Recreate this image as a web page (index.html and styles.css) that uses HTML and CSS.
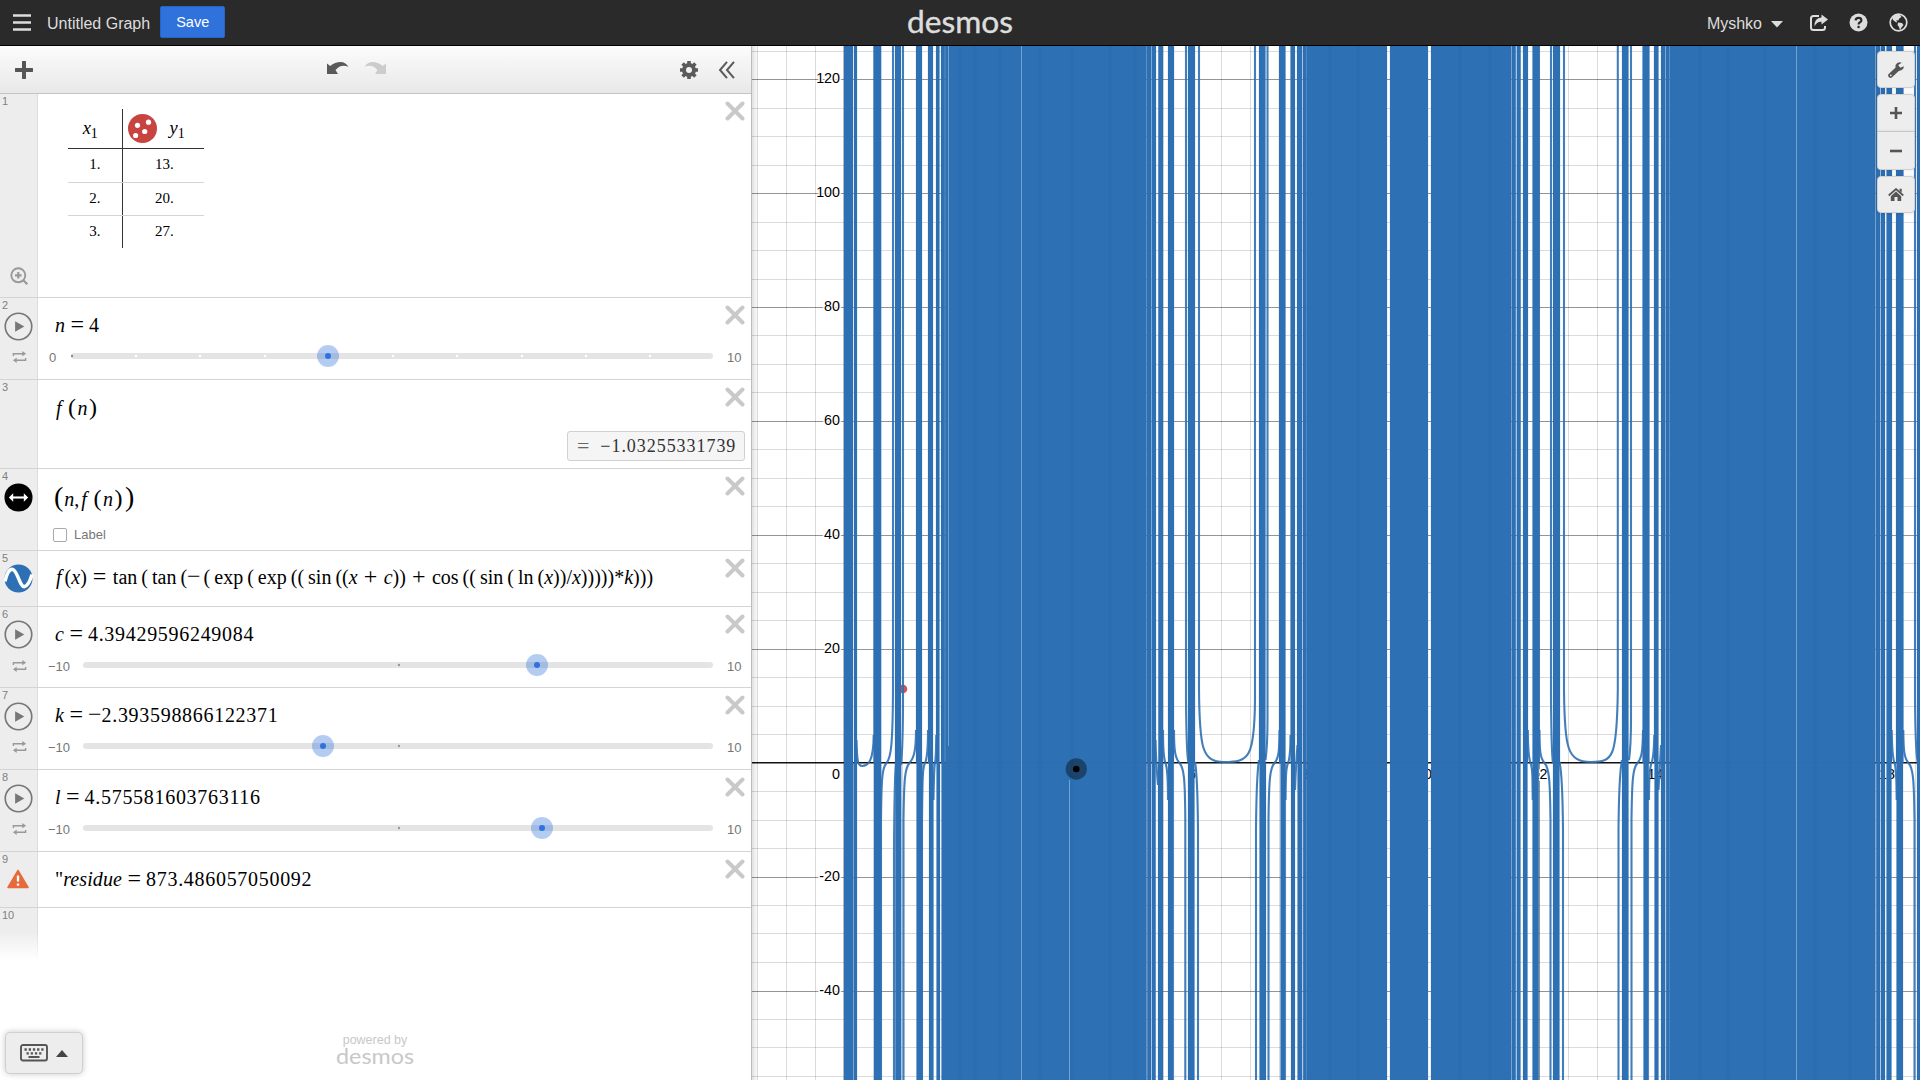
FILE: index.html
```html
<!DOCTYPE html>
<html lang="en">
<head>
<meta charset="utf-8">
<title>Untitled Graph</title>
<link rel="stylesheet" href="styles.css">
</head>
<body>
<svg width="0" height="0" class="defs">
  <symbol id="close" viewBox="0 0 20 20"><path d="M2.500 2.500l15 15M17.500 2.500l-15 15" stroke="#c9c9c9" stroke-width="4" stroke-linecap="round"/></symbol>
  <symbol id="play" viewBox="0 0 30 30"><circle cx="15" cy="15" r="13.700" fill="none" stroke="#777" stroke-width="1.700"/><path d="M11.500 9.500v11l9.500-5.500z" fill="#777"/></symbol>
  <symbol id="loop" viewBox="0 0 16 14"><path d="M1.500 6V3.500H13M14.500 8v2.500H3" fill="none" stroke="#999" stroke-width="1.500"/><path d="M11 0.500l4 3-4 2.800zM5 7.700l-4 2.800 4 3z" fill="#999"/></symbol>
</svg>
<header class="topbar">
  <svg class="burger" width="18" height="17"><path d="M0 1.500h18M0 8.500h18M0 15.500h18" stroke="#ddd" stroke-width="2.600"/></svg>
  <span class="title">Untitled Graph</span>
  <button class="save">Save</button>
  <svg class="logo" width="110" height="45"><text x="1" y="33" textLength="106" lengthAdjust="spacingAndGlyphs">desmos</text></svg>
  <nav class="account">
    <span>Myshko</span>
    <svg class="caret" width="12" height="7"><path d="M0 0h12l-6 6.500z" fill="#ddd"/></svg>
    <svg class="share" width="20" height="18" viewBox="0 0 20 18"><path d="M10 2H4.500Q2 2 2 4.500v9Q2 16 4.500 16h9Q16 16 16 13.500V12" fill="none" stroke="#ddd" stroke-width="2"/><path d="M12.500 0.500l6.500 5-6.500 5V7.700Q7.500 7.500 5.500 12.500Q5 4 12.500 3.500z" fill="#ddd"/></svg>
    <svg class="help" width="19" height="19" viewBox="0 0 19 19"><circle cx="9.500" cy="9.500" r="9" fill="#ddd"/><path d="M6.600 7.400Q6.700 4.800 9.500 4.800T12.400 7.200Q12.400 8.600 11 9.300Q9.600 10 9.600 11.400" fill="none" stroke="#2a2a2a" stroke-width="2.200"/><circle cx="9.600" cy="14" r="1.300" fill="#2a2a2a"/></svg>
    <svg width="19" height="19" viewBox="0 0 19 19"><circle cx="9.500" cy="9.500" r="8.300" fill="none" stroke="#ddd" stroke-width="1.700"/><path d="M3 4.500L6.500 1.500l4.500.5 1.500 2-2 1.200-1 2-2.300.3 1 1.500-1 .5L4 7zM9 9.500l4 .5 1.500 2-2 2.500-1.500 2.700-1-3.200-1.500-2z" fill="#ddd"/></svg>
  </nav>
</header>
<main class="workspace">
  <section class="panel">
    <div class="toolbar">
      <svg class="add" width="18" height="18"><path d="M9 1v16M1 9h16" stroke="#555" stroke-width="4" stroke-linecap="round"/></svg>
      <svg class="undo" width="22" height="13" viewBox="0 0 22 13"><path d="M0 1.500l3.200 2.500Q8 0 13.500 0Q18.500 0 21.500 4.800Q14 1.500 8.500 8l2.500 4H0z" fill="#5a5a5a"/></svg>
      <svg class="redo" width="22" height="13" viewBox="0 0 22 13"><path d="M22 1.500l-3.200 2.500Q14 0 8.500 0Q3.500 0 .5 4.800Q8 1.500 13.500 8l-2.500 4H22z" fill="#ccc"/></svg>
      <svg class="gear" width="18" height="18" viewBox="0 0 18 18"><circle cx="9" cy="9" r="5" fill="none" stroke="#5a5a5a" stroke-width="4"/><path d="M9 0v3.500M9 14.500V18M0 9h3.500M14.500 9H18M2.600 2.600l2.500 2.500M12.900 12.900l2.500 2.500M15.400 2.600l-2.500 2.500M5.100 12.900l-2.500 2.500" stroke="#5a5a5a" stroke-width="3.600"/></svg>
      <svg class="collapse" width="18" height="18"><path d="M9 .8L2 9l7 8.200M16 .8L9 9l7 8.200" fill="none" stroke="#5a5a5a" stroke-width="2"/></svg>
    </div>

    <div class="row row-table">
      <div class="gutter"><b>1</b><svg class="zoomfit" width="19" height="19" viewBox="0 0 19 19"><circle cx="8.300" cy="8.300" r="7" fill="none" stroke="#999" stroke-width="1.900"/><path d="M5 8.300h6.600M8.300 5v6.600M13.300 13.300l4 4" stroke="#999" stroke-width="2.200"/></svg></div>
      <div class="cell">
        <table>
          <tr class="head"><td><i>x</i><sub>1</sub></td><td><div class="yhead"><svg width="29" height="29"><circle cx="14.500" cy="14.500" r="14.500" fill="#c74440"/><g fill="#fff"><circle cx="9.500" cy="11.300" r="2.600"/><circle cx="20.500" cy="8.200" r="2.600"/><circle cx="16.700" cy="17.500" r="2.600"/><circle cx="7.600" cy="21.500" r="2.600"/></g></svg><span><i>y</i><sub>1</sub></span></div></td></tr>
          <tr class="tall"><td>1.</td><td>13.</td></tr>
          <tr><td>2.</td><td>20.</td></tr>
          <tr><td>3.</td><td>27.</td></tr>
        </table>
      </div>
      <svg class="close"><use href="#close"/></svg>
    </div>

    <div class="row row-slider">
      <div class="gutter"><b>2</b><svg class="badge"><use href="#play"/></svg><svg class="loop"><use href="#loop"/></svg></div>
      <div class="cell">
        <div class="math"><i>n</i><span class="op">=</span><span class="num">4</span></div>
        <div class="slider"><span class="min short">0</span><svg class="track" width="642" height="24"><rect y="9" width="642" height="6" rx="3" fill="#e4e4e4"/><g fill="#fff"><circle cx="65" cy="12" r="1.200"/><circle cx="129" cy="12" r="1.200"/><circle cx="194" cy="12" r="1.200"/><circle cx="322" cy="12" r="1.200"/><circle cx="386" cy="12" r="1.200"/><circle cx="451" cy="12" r="1.200"/><circle cx="515" cy="12" r="1.200"/><circle cx="579" cy="12" r="1.200"/></g><circle cx="1" cy="12" r="1.200" fill="#888"/><circle cx="257" cy="12" r="11" fill="#2f72dc" opacity=".36"/><circle cx="257" cy="12" r="3" fill="#2f72dc"/></svg><span class="max">10</span></div>
      </div>
      <svg class="close"><use href="#close"/></svg>
    </div>

    <div class="row row-eval">
      <div class="gutter"><b>3</b></div>
      <div class="cell">
        <div class="math"><i class="f">f</i><span class="p24">(</span><i>n</i><span class="p24">)</span></div>
        <div class="result"><span class="op">=</span><span>−1.03255331739</span></div>
      </div>
      <svg class="close"><use href="#close"/></svg>
    </div>

    <div class="row row-point">
      <div class="gutter"><b>4</b><svg class="badge" viewBox="0 0 30 30"><circle cx="15" cy="15" r="14.500"/><path d="M8 15h14" stroke="#fff" stroke-width="2.200"/><path d="M9.500 10.500L5 15l4.500 4.500zM20.500 10.500L25 15l-4.500 4.500z" fill="#fff"/></svg></div>
      <div class="cell">
        <div class="math"><span class="p28">(</span><i>n</i><span>,</span><i class="f">f</i><span class="p24">(</span><i>n</i><span class="p24">)</span><span class="p28">)</span></div>
        <label class="check"><span class="box"></span>Label</label>
      </div>
      <svg class="close"><use href="#close"/></svg>
    </div>

    <div class="row row-short">
      <div class="gutter"><b>5</b><svg class="badge up" viewBox="0 0 30 30"><circle cx="15" cy="15" r="14.500" fill="#2d70b3"/><path d="M1 18C3.500 8 5.500 5.500 8.500 5.500C14 6 16 23.500 21 23.500C24.500 23 26.500 19 29 11" fill="none" stroke="#fff" stroke-width="3.600"/></svg></div>
      <div class="cell">
        <div class="math long"><i class="f">f</i>(<i>x</i>)<span class="op">=</span><span class="fn first">tan</span>(<span class="fn">tan</span>(<span class="neg">−</span>(<span class="fn">exp</span>(<span class="fn">exp</span>((<span class="fn">sin</span>((<i>x</i><span class="op">+</span><i>c</i>))<span class="op">+</span><span class="fn first">cos</span>((<span class="fn">sin</span>(<span class="fn">ln</span>(<i>x</i>))/<i>x</i>)))))*<i>k</i>)))</div>
      </div>
      <svg class="close"><use href="#close"/></svg>
    </div>

    <div class="row row-slider less">
      <div class="gutter"><b>6</b><svg class="badge up"><use href="#play"/></svg><svg class="loop"><use href="#loop"/></svg></div>
      <div class="cell">
        <div class="math"><i>c</i><span class="op">=</span><span class="num">4.39429596249084</span></div>
        <div class="slider"><span class="min">−10</span><svg class="track" width="630" height="24"><rect y="9" width="630" height="6" rx="3" fill="#e4e4e4"/><circle cx="316" cy="12" r="1.200" fill="#999"/><circle cx="454" cy="12" r="11" fill="#2f72dc" opacity=".36"/><circle cx="454" cy="12" r="3" fill="#2f72dc"/></svg><span class="max">10</span></div>
      </div>
      <svg class="close"><use href="#close"/></svg>
    </div>

    <div class="row row-slider">
      <div class="gutter"><b>7</b><svg class="badge"><use href="#play"/></svg><svg class="loop"><use href="#loop"/></svg></div>
      <div class="cell">
        <div class="math"><i>k</i><span class="op">=</span><span class="neg">−</span><span class="num">2.393598866122371</span></div>
        <div class="slider"><span class="min">−10</span><svg class="track" width="630" height="24"><rect y="9" width="630" height="6" rx="3" fill="#e4e4e4"/><circle cx="316" cy="12" r="1.200" fill="#999"/><circle cx="240" cy="12" r="11" fill="#2f72dc" opacity=".36"/><circle cx="240" cy="12" r="3" fill="#2f72dc"/></svg><span class="max">10</span></div>
      </div>
      <svg class="close"><use href="#close"/></svg>
    </div>

    <div class="row row-slider">
      <div class="gutter"><b>8</b><svg class="badge"><use href="#play"/></svg><svg class="loop"><use href="#loop"/></svg></div>
      <div class="cell">
        <div class="math"><i>l</i><span class="op">=</span><span class="num">4.575581603763116</span></div>
        <div class="slider"><span class="min">−10</span><svg class="track" width="630" height="24"><rect y="9" width="630" height="6" rx="3" fill="#e4e4e4"/><circle cx="316" cy="12" r="1.200" fill="#999"/><circle cx="459" cy="12" r="11" fill="#2f72dc" opacity=".36"/><circle cx="459" cy="12" r="3" fill="#2f72dc"/></svg><span class="max">10</span></div>
      </div>
      <svg class="close"><use href="#close"/></svg>
    </div>

    <div class="row row-short">
      <div class="gutter"><b>9</b><svg class="warn" width="22" height="20" viewBox="0 0 22 20"><path d="M11 1.500L21 18.500H1z" fill="#e86a3c" stroke="#e86a3c" stroke-width="1.500" stroke-linejoin="round"/><path d="M11 6.500v6M11 14.500v2.300" stroke="#fff" stroke-width="2.300"/></svg></div>
      <div class="cell">
        <div class="math"><span>"</span><i class="word">residue</i><span class="op">=</span><span class="num">873.486057050092</span></div>
      </div>
      <svg class="close"><use href="#close"/></svg>
    </div>

    <div class="row row-last"><div class="gutter"><b>10</b></div></div>

    <footer class="bottom">
      <button class="keypad">
        <svg width="28" height="18" viewBox="0 0 28 18"><rect x="1" y="1" width="26" height="15.500" rx="2" fill="none" stroke="#555" stroke-width="1.900"/><path d="M4.500 5.500h19" stroke="#555" stroke-width="2.300" stroke-dasharray="2.300 1.900"/><path d="M6.500 9.300h15" stroke="#555" stroke-width="2.300" stroke-dasharray="2.300 1.900"/><path d="M8.500 13h11" stroke="#555" stroke-width="2"/></svg>
        <svg width="12" height="7"><path d="M0 7h12L6 0z" fill="#444"/></svg>
      </button>
      <div class="powered"><span>powered by</span><svg width="80" height="28"><text x="1" y="19" textLength="78" lengthAdjust="spacingAndGlyphs">desmos</text></svg></div>
    </footer>
  </section>

  <section class="graph">
    <svg class="plot" width="1168" height="1034" viewBox="752 46 1168 1034">
      <defs><linearGradient id="edge"><stop offset="0" stop-color="#000" stop-opacity=".12"/><stop offset="1" stop-color="#000" stop-opacity="0"/></linearGradient></defs>
      <rect x="752" y="46" width="1168" height="1034" fill="#fff"/>
      <path class="minor" d="M757.500 46v1034M786.500 46v1034M815.500 46v1034M873.500 46v1034M902.500 46v1034M931.500 46v1034M1163.500 46v1034M1221.500 46v1034M1250.500 46v1034M1279.500 46v1034M1568.500 46v1034M1597.500 46v1034M1626.500 46v1034M1915.500 46v1034"/>
      <path class="minor" d="M752 51.500h1168M752 108.500h1168M752 136.500h1168M752 165.500h1168M752 222.500h1168M752 250.500h1168M752 279.500h1168M752 335.500h1168M752 364.500h1168M752 392.500h1168M752 449.500h1168M752 478.500h1168M752 506.500h1168M752 563.500h1168M752 592.500h1168M752 620.500h1168M752 677.500h1168M752 706.500h1168M752 734.500h1168M752 791.500h1168M752 820.500h1168M752 848.500h1168M752 905.500h1168M752 933.500h1168M752 962.500h1168M752 1019.500h1168M752 1047.500h1168M752 1076.500h1168"/>
      <path class="major" d="M752 79.500h1168M752 193.500h1168M752 307.500h1168M752 421.500h1168M752 535.500h1168M752 649.500h1168M752 877.500h1168M752 991.500h1168M1192.500 46v1034M1308.500 46v1034M1539.500 46v1034M1655.500 46v1034M1887.500 46v1034"/>
      <path d="M752 762.700h1168M844.500 46v1034" stroke="#111" stroke-width="1.500"/>
      <g class="ylabel"><text x="840" y="83">120</text><text x="840" y="197">100</text><text x="840" y="311">80</text><text x="840" y="425">60</text><text x="840" y="539">40</text><text x="840" y="653">20</text><text x="840" y="779">0</text><text x="840" y="881">-20</text><text x="840" y="995">-40</text></g>
      <g class="xlabel"><text x="1192" y="779">6</text><text x="1308" y="779">8</text><text x="1424" y="779">10</text><text x="1539.500" y="779">12</text><text x="1655.500" y="779">14</text><text x="1887" y="779">18</text></g>
      <circle cx="903" cy="689" r="4.300" fill="#c74440" opacity=".9"/>
      <path class="soft" d="M944 46h5v1034h-5zM1145 46h6.500v1034h-6.500zM1302.500 46h5v1034h-5zM1511 46h5v1034h-5zM1665.500 46h5v1034h-5zM1875 46h5v1034h-5z"/>
      <!-- branches above the axis -->
      <path class="band" d="M844 46h9V763h-9zM854 46h3V763h-3zM873.500 46h7.700V763h-7.700zM895 46h6V763h-6zM916 46h6V763h-6zM928 46h5V763h-5zM936 46h3.500V763h-3.500zM941 46h3.700V763h-3.700zM945.300 46h201V763h-201zM1147 46h4.300V763h-4.300zM1152 46h4V763h-4zM1158.300 46h4.700V763h-4.700zM1168 46h6V763h-6zM1188 46h7V763h-7zM1259 46h6.500V763h-6.500zM1279 46h6.500V763h-6.500zM1290.500 46h4.500V763h-4.500zM1297 46h5V763h-5zM1303 46h3.500V763h-3.500zM1307 46h80V763h-80zM1390 46h38V763h-38zM1431 46h80V763h-80zM1512 46h3.500V763h-3.500zM1516.700 46h4V763h-4zM1523 46h5V763h-5zM1532.500 46h7.200V763h-7.200zM1553 46h7V763h-7zM1622 46h6.500V763h-6.500zM1642.500 46h7V763h-7zM1654 46h4.500V763h-4.500zM1661 46h4.300V763h-4.300zM1666 46h3.300V763h-3.300zM1670 46h205V763h-205zM1876 46h4.300V763h-4.300zM1881 46h4V763h-4zM1886.500 46h5.500V763h-5.500zM1896 46h7.500V763h-7.500zM1917 46h3V763h-3z"/>
      <!-- branches below the axis -->
      <path class="band" d="M844 763h9.500v317h-9.500zM854 763h3v317h-3zM874 763h7.300v317h-7.300zM895.300 763h6v317h-6zM916.500 763h6v317h-6zM929 763h4.500v317h-4.500zM936.500 763h3.500v317h-3.500zM941.500 763h204.800v317h-204.800zM1147.500 763h3.500v317h-3.500zM1152 763h3.700v317h-3.700zM1158 763h5v317h-5zM1168 763h5.800v317h-5.800zM1188 763h6.500v317h-6.500zM1259.500 763h6.500v317h-6.500zM1280.500 763h5.300v317h-5.300zM1291 763h4v317h-4zM1297.500 763h4.500v317h-4.500zM1303.300 763h3.200v317h-3.200zM1307 763h80v317h-80zM1390 763h38v317h-38zM1431 763h80v317h-80zM1512 763h3.500v317h-3.500zM1516.700 763h3.800v317h-3.800zM1523 763h4.500v317h-4.500zM1532.500 763h6.300v317h-6.300zM1553 763h6.500v317h-6.500zM1622 763h6.500v317h-6.500zM1643.500 763h5.300v317h-5.300zM1654.500 763h4v317h-4zM1661 763h4v317h-4zM1666.300 763h3.200v317h-3.200zM1670 763h205v317h-205zM1876.500 763h3.700v317h-3.700zM1881 763h4v317h-4zM1886.500 763h5v317h-5zM1896.500 763h6.500v317h-6.500zM1917 763h3v317h-3z"/>
      <g class="curve">
        <path d="M856.500 740C857 762 858 766 862 766C868 766 873.500 762 873.700 735M881 1080V820C881.500 778 882 768 886.500 763S892.700 745 893 690V46M894 1080V850Q894.500 775 896 763M903 46V700Q903 745 901 765M903.500 1080V820C904 778 905 768 909.500 763S916 750 916 730M922 1080V820C922.500 778 922.500 768 925 763S928 750 928 730M933.500 800C934 772 934 768 935 763S936 750 936.300 735"/>
        <path d="M1199 46V690C1199.500 748 1202 762 1224 762C1249 762 1254.500 758 1255 700V46M1174 730C1174 750 1175 758 1179.500 763S1185 778 1185.300 820V1080M1163 730C1163 750 1163.500 758 1165.500 763S1168 775 1168 800M1155.500 740Q1156 763 1158 785M1186 46V700Q1186.500 755 1188.500 763M1195 762Q1197.500 775 1198 830V1080M1256 1080V830Q1256.500 775 1259 760M1267.500 46V720Q1267.500 745 1265.500 760M1268.500 1080V820C1269 778 1270 768 1274.500 763S1279.300 750 1279.500 730M1285.500 800C1285.800 775 1286 768 1288 763S1290.500 750 1290.500 735M1295 790Q1296 763 1297.500 745"/>
        <path d="M1564 46V690C1564.500 748 1567 762 1591 762C1613 762 1617 758 1617.800 690V46M1539.500 730C1539.500 750 1540 758 1544.500 763S1550 778 1550.500 820V1080M1527.800 730C1528 750 1528.500 758 1530.500 763S1532.500 775 1532.700 800M1551 46V700Q1551.500 755 1553 763M1559.500 762Q1562.500 775 1563 830V1080M1618.500 1080V830Q1619 775 1622 760M1631 46V720Q1631 745 1629 760M1631.500 1080V820C1632 778 1633 768 1637.500 763S1642.700 750 1643 730M1649 800C1649 775 1649.500 768 1651.500 763S1654 750 1654.300 735M1658.500 790Q1660 763 1661 745M1891.700 730C1892 750 1892.500 758 1894.500 763S1896.300 775 1896.700 800M1903.300 730C1903.500 750 1904 758 1908.500 763S1914 778 1914.500 820V1080M1915 46V700Q1915.500 755 1918 763"/>
      </g>
      <path class="hair" d="M1021.500 46v1034M1069.500 780v300M948.500 46v700M1796.500 46v1034"/>
      <path class="stripe" d="M960 46v1034M975 46v1034M1000 46v1034M1040 46v1034M1072 46v1034M1110 46v1034M1135 46v1034M1330 46v1034M1358 46v1034M1460 46v1034M1490 46v1034M1700 46v1034M1728 46v1034M1765 46v1034M1815 46v1034M1850 46v1034"/>
      <circle cx="1076.300" cy="769" r="10.700" opacity=".4"/><circle cx="1076.300" cy="769" r="3.300"/>
      <rect x="752" y="46" width="6" height="1034" fill="url(#edge)"/>
    </svg>
    <div class="controls">
      <button><svg width="16" height="16" viewBox="0 0 16 16"><path d="M2.500 13.500L10 6.500" stroke="#555" stroke-width="4.600" stroke-linecap="round"/><path d="M13.800.8Q9.500-.8 7.600 3Q7 6 9 8Q12 9.800 15 7Q16 5.500 15.600 4.200L12.500 5.700L10.600 4.600V2.700z" fill="#555"/><circle cx="2.800" cy="13.300" r=".9" fill="#eee"/></svg></button>
      <div class="zoom">
        <button><svg width="12" height="12"><path d="M6 0v12M0 6h12" stroke="#555" stroke-width="2.600"/></svg></button>
        <button><svg width="12" height="12"><path d="M0 6h12" stroke="#555" stroke-width="2.600"/></svg></button>
      </div>
      <button><svg width="16" height="14" viewBox="0 0 16 14"><path d="M.7 7.500L8 1l7.300 6.500" fill="none" stroke="#555" stroke-width="1.700"/><path d="M11.500.8h2.200v4l-2.200-2zM8 3.500l5.200 4.700V13H9.500V9H6.500v4H2.800V8.200z" fill="#555"/></svg></button>
    </div>
  </section>
</main>
</body>
</html>
```
FILE: styles.css
```css
* { box-sizing: border-box; }
body { margin: 0; width: 1920px; height: 1080px; overflow: hidden; display: flex; flex-direction: column; background: #fff; font-family: "Liberation Sans", Arial, sans-serif; }
svg { display: block; flex: none; }
button { font: inherit; padding: 0; }
.defs { position: absolute; }

.topbar { height: 46px; flex: none; background: #2a2a2a; border-bottom: 1px solid #000; display: flex; align-items: center; color: #ddd; font-size: 16px; padding: 0 12px 0 13px; }
.title { margin-left: 16px; line-height: 45px; padding-top: 1px; }
.save { width: 65px; height: 32px; margin-left: 10px; margin-top: -1px; background: #2f72dc; border: 1px solid #2565c8; border-radius: 2px; color: #fff; font-size: 14.500px; }
.logo { margin-left: 681px; }
.logo text { font: 31px Lato, sans-serif; fill: #ddd; stroke: #ddd; stroke-width: .4px; }
.account { margin-left: auto; display: flex; align-items: center; }
.account span { line-height: 45px; padding-top: 1px; }
.caret { margin-left: 9px; margin-top: 3px; }
.share { margin-left: 26px; }
.help { margin: 0 21px 0 20px; }

.workspace { display: flex; height: 1034px; }
.panel { width: 752px; flex: none; border-right: 1px solid #bbb; display: flex; flex-direction: column; }
.toolbar { height: 48px; flex: none; border-bottom: 1px solid #c4c4c4; background: linear-gradient(#fcfcfc, #e8e8e8); display: flex; align-items: center; padding: 0 15px 0 15px; }
.undo { margin-left: 294px; margin-top: -2px; }
.redo { margin-left: 15px; margin-top: -2px; }
.gear { margin-left: auto; }
.collapse { margin-left: 20px; }

.row { position: relative; flex: none; display: flex; border-bottom: 1px solid #d4d4d4; }
.row-table { height: 204px; }
.row-slider { height: 82px; }
.row-slider.less { height: 81px; }
.row-eval { height: 89px; }
.row-point { height: 82px; }
.row-short { height: 56px; }
.row-last { height: 52px; border: 0; }
.gutter { width: 38px; flex: none; background: #ededed; border-right: 1px solid #ddd; padding: 1px 4px 0 2px; display: flex; flex-direction: column; }
.row-last .gutter { background: linear-gradient(#ededed 45%, #fff); border-image: linear-gradient(#ddd 45%, #fff) 1; }
.gutter b { font: 11px/12px "Liberation Sans", sans-serif; color: #808080; height: 12px; }
.badge { width: 29px; height: 29px; margin: 1px 0 0 2px; }
.badge.up { margin-top: 0; }
.loop { width: 15px; height: 14px; margin: 9px 0 0 10px; }
.up + .loop { margin-top: 10px; }
.zoomfit { margin: 160px 0 0 8px; }
.warn { margin: 4px 0 0 5px; }
.close { position: absolute; right: 6px; top: 7px; width: 20px; height: 20px; }
.cell { flex: 1; display: flex; flex-direction: column; }

.math { height: 46px; line-height: 54px; padding-left: 17px; font-family: "Liberation Serif", "Times New Roman", serif; font-size: 20px; color: #000; white-space: nowrap; }
.op, .neg { font-size: 24px; line-height: 0; }
.op { margin: 0 5px 0 5.500px; }
.num { letter-spacing: .7px; }
.f { margin: 0 3px 0 1px; }
.row-eval .f { margin-right: 5px; }
.row-point .f { margin: 0 5px 0 2px; }
.fn { margin: 0 4px 0 4px; }
.fn.first { margin-left: 0; }
.long.math { line-height: 53px; }
.long .op { margin: 0 6.500px 0 6px; }
.long .neg { margin-right: 3px; }
.word { letter-spacing: .1px; }
.p24 { font-size: 24px; line-height: 0; margin: 0 1.500px; }
.p28 { font-size: 28px; line-height: 0; margin: 0 1px; }
.row-eval .math { line-height: 56px; height: 51px; }
.row-point .math { line-height: 61px; height: 55px; padding-left: 15px; }

.slider { display: flex; align-items: center; height: 24px; color: #777; font-size: 13px; }
.slider span { margin-top: 2px; }
.min { width: 35px; margin-left: 10px; flex: none; }
.min.short { width: 23px; padding-left: 1px; }
.max { margin-left: 14px; }

.result { align-self: flex-end; margin-right: 6px; width: 178px; height: 30px; border: 1px solid #d0d0d0; border-radius: 3px; background: #f5f5f5; font: 18px/30px "Liberation Serif", serif; letter-spacing: .95px; color: #333; display: flex; align-items: center; white-space: nowrap; }
.result .op { margin: 0 10px 0 9px; font-size: 22px; color: #666; }
.check { display: flex; align-items: center; gap: 7px; padding-left: 15px; margin-top: 3px; height: 15px; font-size: 13px; color: #777; }
.box { width: 14px; height: 14px; border: 1px solid #aaa; border-radius: 2px; }

table { margin: 15px 0 0 30px; border-collapse: collapse; width: 136px; font-family: "Liberation Serif", serif; font-size: 15px; table-layout: fixed; }
td { padding: 0; height: 33px; text-align: center; border-bottom: 1px solid #d4d4d4; }
.tall td { height: 34px; padding-bottom: 2px; }
td:first-child { width: 54px; border-right: 1px solid #333; }
td:last-child { padding-left: 2px; }
tr:last-child td { border-bottom: 0; }
.head td { height: 39px; font-size: 18.500px; border-bottom: 1px solid #333; padding: 0; }
.head td:first-child { padding-right: 9px; }
.head sub { font-size: 14px; line-height: 0; vertical-align: -4px; }
.yhead { display: flex; align-items: center; padding-left: 5px; gap: 13px; }

.row-last + .bottom { margin-top: 68px; height: 54px; }
.bottom { display: flex; align-items: flex-start; padding-left: 5px; }
.keypad { width: 78px; height: 42px; margin-top: 4px; border: 1px solid #d0d0d0; border-radius: 5px; background: #ededed; display: flex; align-items: center; justify-content: center; gap: 8px; box-shadow: 0 0 6px rgba(0,0,0,.22); }
.powered { margin-left: 251px; width: 82px; font-size: 12.500px; line-height: 14px; color: #c8c8c8; display: flex; flex-direction: column; align-items: center; padding-top: 5px; }
.powered svg { margin-top: -2px; overflow: visible; }
.powered text { font: 22px Lato, sans-serif; fill: #c8c8c8; }

.graph { position: relative; flex: 1; overflow: hidden; }
.minor { stroke: #000; stroke-opacity: .14; fill: none; }
.major { stroke: #000; stroke-opacity: .42; fill: none; }
.plot text { font: 14.300px "Liberation Sans", Arial, sans-serif; fill: #000; stroke: #fff; stroke-width: 3px; paint-order: stroke; }
.ylabel { text-anchor: end; }
.xlabel { text-anchor: middle; }
.band { fill: #2d70b3; stroke: #2d70b3; stroke-width: .5px; stroke-opacity: .35; }
.soft { fill: #2d70b3; fill-opacity: .55; }
.curve { fill: none; stroke: #2d70b3; stroke-width: 2.100px; stroke-opacity: .9; }
.hair { fill: none; stroke: #73a0cf; }
.stripe { fill: none; stroke: #2567ab; stroke-opacity: .25; stroke-width: 3px; }
.controls { position: absolute; top: 5px; right: 5px; width: 38px; display: flex; flex-direction: column; gap: 6px; }
.controls button { width: 38px; height: 37px; background: #ededed; border: 1px solid #d0d0d0; border-radius: 4px; display: flex; align-items: center; justify-content: center; box-shadow: 0 0 4px rgba(0,0,0,.12); }
.zoom button:first-child { height: 38px; border-radius: 4px 4px 0 0; }
.zoom button:last-child { height: 38px; border-top: 0; border-radius: 0 0 4px 4px; }
```
